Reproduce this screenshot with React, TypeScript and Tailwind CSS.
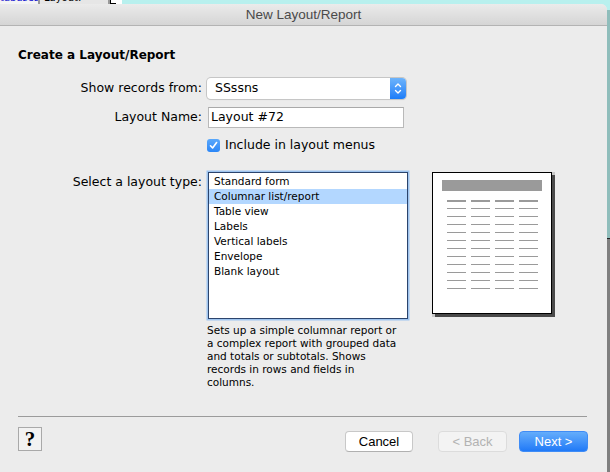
export default function App() {
  const items = [
    "Standard form",
    "Columnar list/report",
    "Table view",
    "Labels",
    "Vertical labels",
    "Envelope",
    "Blank layout",
  ];
  const rows = Array.from({ length: 11 });
  const cols = [0, 1, 2, 3];
  return (
    <div className="w-[610px] h-[472px] overflow-hidden flex flex-col bg-[#b8f0ee]">
      {/* background windows strip */}
      <div className="h-[4px] flex shrink-0 overflow-hidden">
        <div className="w-[38px] bg-[#f4f4f4] overflow-hidden">
          <div className="-mt-[7px] text-[10px] leading-[10px] text-[#1a1ad0] font-['DejaVu_Sans',sans-serif]">tabases</div>
        </div>
        <div className="w-[2px] bg-[#9a9a9a]" />
        <div className="w-[68px] bg-[#e6e6e6] overflow-hidden pl-[4px]">
          <div className="-mt-[7px] text-[10px] leading-[10px] text-black font-['DejaVu_Sans',sans-serif]">Layout:</div>
        </div>
        <div className="w-[2px] bg-[#9a9a9a]" />
        <div className="w-[12px] bg-white flex">
          <div className="w-px bg-black" />
          <div className="flex-1 flex flex-col">
            <div className="h-[3px]" />
            <div className="h-px w-[5px] bg-black" />
          </div>
        </div>
        <div className="flex-1 bg-[#b8f0ee]" />
      </div>

      <div className="flex-1 flex min-h-0">
        {/* dialog */}
        <div className="w-[607px] flex flex-col bg-[#ececec] rounded-tr-[6px] overflow-hidden">
          <div className="h-[22px] shrink-0 border-b border-[#b3b3b3] bg-gradient-to-b from-[#ebebeb] to-[#d5d5d5] flex items-center justify-center">
            <span className="text-[13.5px] leading-none text-[#4a4a4a] font-['Liberation_Sans',sans-serif]">New Layout/Report</span>
          </div>

          <div className="flex-1 flex flex-col px-[18px] pt-[21px] font-['DejaVu_Sans',sans-serif] text-black">
            <div className="text-[12px] leading-[16px] font-bold">Create a Layout/Report</div>

            <div className="grid grid-cols-[184px_1fr] gap-x-[5px]">
              {/* select */}
              <div className="mt-[15px] h-[21px] flex items-center justify-end text-[12.5px]">Show records from:</div>
              <div className="mt-[15px] h-[21px] w-[199px] flex rounded-[4px] bg-white shadow-[0_0_0_1px_#c6c6c6,0_1px_1px_rgba(0,0,0,0.15)]">
                <div className="flex-1 flex items-center pl-[8px] text-[12.5px]">SSssns</div>
                <div className="w-[16px] rounded-r-[4px] bg-gradient-to-b from-[#6db4fb] to-[#1a7cf8] flex items-center justify-center">
                  <svg width="8" height="13" viewBox="0 0 8 13" fill="none" stroke="white" strokeWidth="1.4" strokeLinecap="round" strokeLinejoin="round">
                    <path d="M1.5 4.5 L4 2 L6.5 4.5" />
                    <path d="M1.5 8.5 L4 11 L6.5 8.5" />
                  </svg>
                </div>
              </div>

              {/* layout name */}
              <div className="mt-[8px] h-[21px] flex items-center justify-end text-[12.5px]">Layout Name:</div>
              <div className="mt-[8px] h-[21px] ml-px w-[196px] bg-white border border-[#b9b9b9] border-t-[#a9a9a9] flex items-center pl-[2px] text-[12.5px]">Layout #72</div>

              {/* checkbox */}
              <div className="mt-[9px] h-[16px]" />
              <div className="mt-[9px] h-[16px] flex items-center gap-[5px]">
                <div className="w-[13px] h-[13px] rounded-[3px] bg-gradient-to-b from-[#5aa8fb] to-[#2a86f7] flex items-center justify-center">
                  <svg width="9" height="9" viewBox="0 0 9 9" fill="none" stroke="white" strokeWidth="1.6" strokeLinecap="round" strokeLinejoin="round">
                    <path d="M1.5 4.8 L3.6 7 L7.6 1.5" />
                  </svg>
                </div>
                <span className="text-[12.5px]">Include in layout menus</span>
              </div>

              {/* listbox */}
              <div className="mt-[18px] pt-[3px] flex justify-end text-[12.5px] leading-[16px]">Select a layout type:</div>
              <div className="mt-[18px] flex flex-col">
                <div className="flex items-start">
                  <div className="ml-px mt-px w-[200px] h-[147px] bg-white border border-[#2c446c] shadow-[0_0_0_1.5px_#9ec4ef] pt-px flex flex-col">
                    {items.map((it, i) => (
                      <div
                        key={it}
                        className={
                          i === 1
                            ? "h-[15px] flex items-center pl-[5px] text-[10.5px] bg-[#b3d7ff]"
                            : "h-[15px] flex items-center pl-[5px] text-[10.5px]"
                        }
                      >
                        {it}
                      </div>
                    ))}
                  </div>
                  {/* preview */}
                  <div className="ml-[24px] mt-[1px] w-[120px] h-[142px] bg-white border border-black shadow-[3px_3px_0_#4a4a4a,3px_0_0_#c8c8c8,0_3px_0_#c8c8c8] flex flex-col items-start">
                    <div className="ml-[9px] mt-[7px] w-[100px] h-[11px] bg-[#9a9a9a]" />
                    <div className="ml-[14px] mt-[9px] flex gap-[5px]">
                      {cols.map((c) => (
                        <div key={c} className="w-[19px] flex flex-col">
                          <div className="h-[2px] bg-[#9a9a9a]" />
                          <div className="mt-[6px] flex flex-col gap-[7px]">
                            {rows.map((_, r) => (
                              <div key={r} className="h-px bg-[#9a9a9a]" />
                            ))}
                          </div>
                        </div>
                      ))}
                    </div>
                  </div>
                </div>
                <div className="mt-[5px] text-[10.5px] leading-[13px]">
                  Sets up a simple columnar report or
                  <br />a complex report with grouped data
                  <br />and totals or subtotals. Shows
                  <br />records in rows and fields in
                  <br />columns.
                </div>
              </div>
            </div>

            <div className="mt-[27px] h-px bg-[#9b9b9b] w-[569px]" />

            <div className="mt-[10px] flex items-start">
              <div className="w-[24px] h-[24px] border border-[#a9a9a9] bg-[#f2f2f2] flex items-center justify-center">
                <span className="text-[21px] leading-none font-bold font-['Liberation_Serif',serif]">?</span>
              </div>
              <div className="flex-1" />
              <div className="mt-[4px] flex font-['Liberation_Sans',sans-serif] text-[13px]">
                <div className="w-[68px] h-[21px] rounded-[4px] bg-white border border-[#c8c8c8] border-b-[#b0b0b0] flex items-center justify-center text-black">Cancel</div>
                <div className="ml-[25px] w-[69px] h-[21px] rounded-[4px] bg-[#f3f3f3] border border-[#dcdcdc] flex items-center justify-center text-[#b2b2b2]">&lt; Back</div>
                <div className="ml-[12px] w-[69px] h-[21px] rounded-[4px] bg-gradient-to-b from-[#64adfb] to-[#1f79f7] border border-[#3f8cf6] flex items-center justify-center text-white">Next &gt;</div>
              </div>
              <div className="w-[1px]" />
            </div>
          </div>
        </div>

        {/* right background strip */}
        <div className="flex-1 flex flex-col">
          <div className="h-[6px] bg-[#b8f0ee]" />
          <div className="h-[228px] bg-[#8fbdbb]" />
          <div className="h-px bg-[#222]" />
          <div className="flex-1 bg-[#7f7f7f]" />
        </div>
      </div>
    </div>
  );
}
